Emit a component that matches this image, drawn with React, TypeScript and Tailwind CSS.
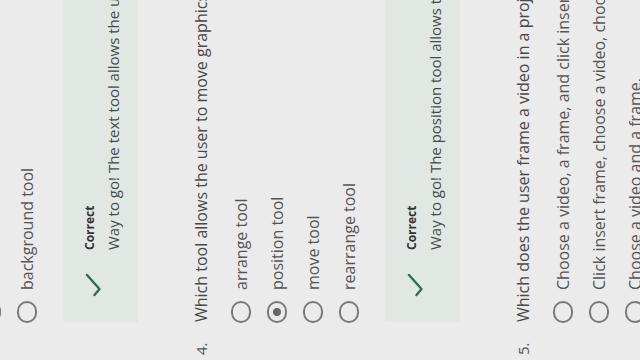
const font = { fontFamily: '"Open Sans", "Liberation Sans", sans-serif' }

type Question = {
  number: string
  prompt: string
  options: string[]
  selected?: number
  feedback: string
}

const questions: Question[] = [
  {
    number: '4.',
    prompt: 'Which tool allows the user to move graphics on the screen?',
    options: ['arrange tool', 'position tool', 'move tool', 'rearrange tool'],
    selected: 1,
    feedback: 'Way to go! The position tool allows the user to move graphics.',
  },
  {
    number: '5.',
    prompt: 'Which does the user frame a video in a project?',
    options: [
      'Choose a video, a frame, and click insert.',
      'Click insert frame, choose a video, choose a frame.',
      'Choose a video and a frame.',
    ],
    feedback: 'Way to go! The frame tool allows the user to frame a video.',
  },
]

function Radio({ checked }: { checked?: boolean }) {
  return (
    <span className="flex h-[20px] w-[22px] shrink-0 items-center justify-center rounded-full border-2 border-[#7a7a7a]">
      {checked && <span className="h-[8px] w-[8px] rounded-full bg-[#666]" />}
    </span>
  )
}

function Option({ label, checked }: { label: string; checked?: boolean }) {
  return (
    <li className="flex h-[36px] items-center gap-[11px] pl-[37px]">
      <Radio checked={checked} />
      <span className="whitespace-nowrap text-[16px] text-[#555]">{label}</span>
    </li>
  )
}

function Feedback({ text }: { text: string }) {
  return (
    <div className="mt-[18px] ml-[38px] flex h-[75px] items-start bg-[#e1e8e3] pt-[16px]">
      <svg className="mt-[6px] ml-[25px] h-[16px] w-[24px] shrink-0" viewBox="0 0 24 16" fill="none">
        <path d="M2 9.5 L8 14.5 L22 2" stroke="#2f6e55" strokeWidth="2.4" strokeLinecap="round" strokeLinejoin="round" />
      </svg>
      <div className="ml-[23px] flex flex-col">
        <p className="text-[12px] leading-[22px] font-bold text-[#333]">Correct</p>
        <p className="whitespace-nowrap text-[15px] leading-[24px] text-[#484848]">{text}</p>
      </div>
    </div>
  )
}

export default function App() {
  return (
    <div className="h-[360px] w-[640px] overflow-hidden bg-[#ebebeb]" style={font}>
      <div className="flow-root h-[640px] w-[780px] origin-top-left translate-y-[360px] -rotate-90 bg-[#ebebeb]">
        <ul className="-mt-[27px]">
          <Option label="border tool" />
          <Option label="background tool" />
        </ul>
        <Feedback text="Way to go! The text tool allows the user to add words to a project." />
        {questions.map((q) => (
          <section key={q.number}>
            <div className="mt-[51px] flex h-[24px] items-center">
              <span className="w-[33px] pl-[5px] text-[15px] text-[#555]">{q.number}</span>
              <p className="whitespace-nowrap pl-[5px] text-[16px] text-[#484848]">{q.prompt}</p>
            </div>
            <ul className="mt-[10px]">
              {q.options.map((opt, i) => (
                <Option key={opt} label={opt} checked={q.selected === i} />
              ))}
            </ul>
            <Feedback text={q.feedback} />
          </section>
        ))}
      </div>
    </div>
  )
}
